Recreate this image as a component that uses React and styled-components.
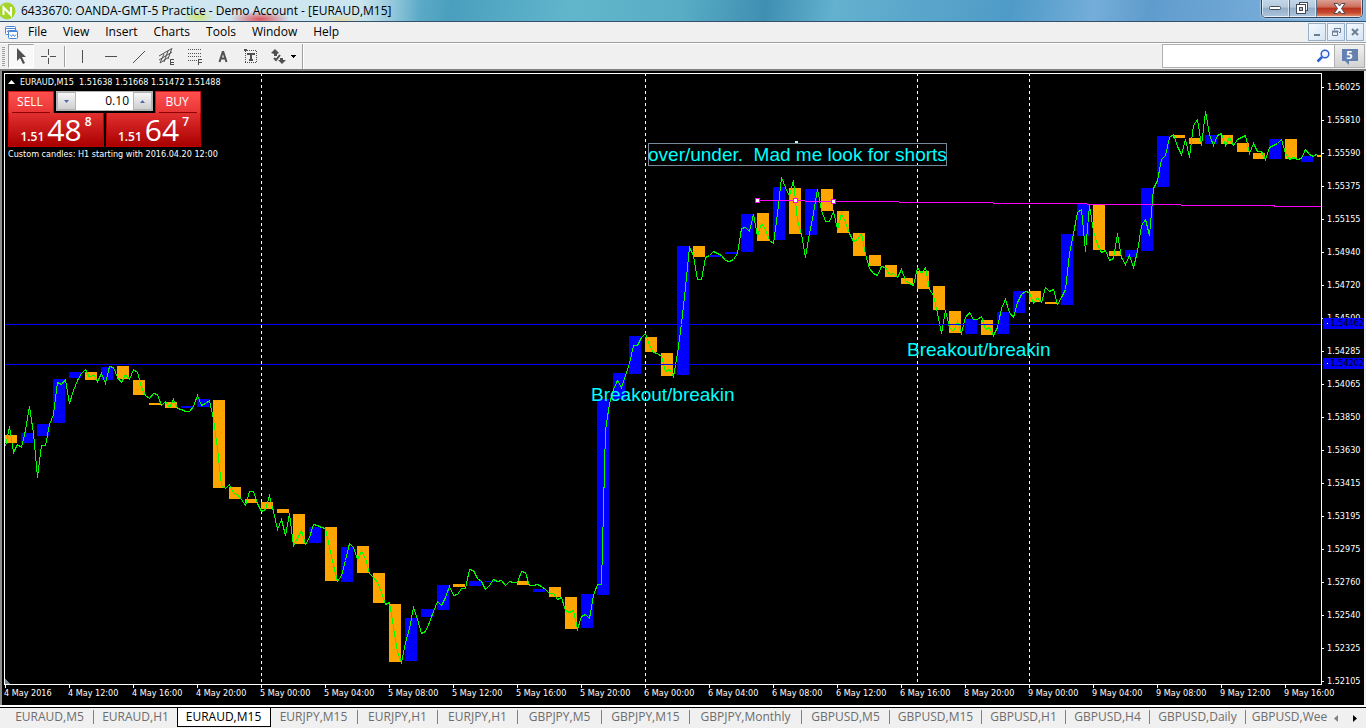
import React, { useState } from 'react'
import styled, { createGlobalStyle } from 'styled-components'

const GlobalStyle = createGlobalStyle`
  * { box-sizing: border-box; }
  body { margin: 0; background: #f0f0f0; }
  button, input { font-family: inherit; padding: 0; margin: 0; border-radius: 0; }
`

const MENU = ['File', 'View', 'Insert', 'Charts', 'Tools', 'Window', 'Help']

const TABS = [
    { name: 'EURAUD,M5', width: 88 },
    { name: 'EURAUD,H1', width: 84 },
    { name: 'EURAUD,M15', width: 92 },
    { name: 'EURJPY,M15', width: 88 },
    { name: 'EURJPY,H1', width: 80 },
    { name: 'EURJPY,H1', width: 80 },
    { name: 'GBPJPY,M5', width: 84 },
    { name: 'GBPJPY,M15', width: 88 },
    { name: 'GBPJPY,Monthly', width: 112 },
    { name: 'GBPUSD,M5', width: 88 },
    { name: 'GBPUSD,M15', width: 92 },
    { name: 'GBPUSD,H1', width: 84 },
    { name: 'GBPUSD,H4', width: 84 },
    { name: 'GBPUSD,Daily', width: 96 },
    { name: 'GBPUSD,Wee', width: 88 },
]

const PRICES = [
    '1.56025', '1.55810', '1.55590', '1.55375', '1.55155', '1.54940', '1.54720',
    '1.54500', '1.54285', '1.54065', '1.53850', '1.53630', '1.53415', '1.53195',
    '1.52975', '1.52760', '1.52540', '1.52325', '1.52105',
]

const TIMES = [
    '4 May 2016', '4 May 12:00', '4 May 16:00', '4 May 20:00', '5 May 00:00', '5 May 04:00',
    '5 May 08:00', '5 May 12:00', '5 May 16:00', '5 May 20:00', '6 May 00:00', '6 May 04:00',
    '6 May 08:00', '6 May 12:00', '6 May 16:00', '8 May 20:00', '9 May 00:00', '9 May 04:00',
    '9 May 08:00', '9 May 12:00', '9 May 16:00',
]

// One close per M15 bar, 4px apart
const CLOSES = [
    446, 426, 452, 444, 447, 430, 406, 433, 477, 445, 445, 424, 414, 382, 384, 379, 403, 390, 380, 373,
    369, 377, 374, 381, 373, 383, 366, 367, 377, 382, 374, 379, 369, 372, 387, 395, 398, 393, 394, 405,
    401, 407, 399, 408, 409, 411, 411, 406, 395, 405, 403, 400, 419, 448, 485, 488, 484, 493, 494, 499,
    505, 491, 491, 503, 511, 509, 495, 511, 529, 519, 535, 513, 545, 538, 530, 544, 537, 524, 525, 527,
    528, 547, 565, 581, 575, 560, 543, 547, 559, 551, 558, 573, 577, 582, 592, 604, 602, 627, 651, 662,
    642, 628, 607, 619, 633, 631, 622, 611, 601, 605, 597, 586, 595, 594, 588, 588, 569, 570, 578, 581,
    589, 585, 579, 581, 580, 585, 581, 582, 582, 571, 572, 585, 585, 584, 586, 589, 593, 593, 599, 597,
    610, 612, 610, 629, 616, 614, 618, 595, 584, 584, 430, 403, 389, 380, 387, 375, 363, 345, 345, 337,
    333, 345, 352, 353, 356, 371, 369, 376, 353, 323, 287, 247, 255, 279, 279, 257, 255, 251, 253, 255,
    260, 261, 259, 253, 228, 227, 231, 214, 236, 223, 229, 240, 243, 213, 177, 187, 196, 180, 220, 234,
    257, 233, 213, 189, 210, 221, 221, 211, 229, 213, 222, 233, 241, 239, 233, 254, 268, 273, 275, 266,
    267, 274, 273, 277, 269, 280, 283, 285, 267, 273, 267, 289, 295, 313, 333, 310, 327, 331, 321, 333,
    317, 312, 319, 319, 316, 329, 327, 335, 327, 308, 299, 312, 317, 302, 294, 291, 292, 303, 297, 302,
    287, 291, 289, 304, 297, 289, 253, 233, 212, 209, 251, 205, 231, 244, 252, 250, 260, 258, 233, 257,
    264, 255, 267, 251, 225, 219, 235, 188, 180, 159, 155, 137, 134, 146, 154, 139, 157, 125, 119, 145,
    111, 134, 145, 135, 133, 145, 137, 145, 139, 137, 135, 153, 143, 151, 151, 159, 147, 145, 143, 139,
    153, 159, 157, 159, 158, 149, 154, 156, 153,
]

// Custom H1 candles: [slot, top, height, up]
const CANDLES = [
    [0, 435, 8, 0], [1, 433, 10, 1], [2, 424, 12, 1], [3, 379, 44, 1], [4, 372, 6, 1], [5, 372, 8, 0],
    [6, 367, 13, 1], [7, 366, 13, 0], [8, 380, 15, 0], [9, 403, 2, 0], [10, 402, 6, 0], [11, 406, 2, 1],
    [12, 399, 8, 1], [13, 400, 88, 0], [14, 487, 12, 0], [15, 499, 4, 0], [16, 502, 7, 0], [17, 509, 4, 0],
    [18, 514, 30, 0], [19, 527, 16, 1], [20, 527, 54, 0], [21, 547, 35, 1], [22, 546, 27, 0], [23, 573, 30, 0],
    [24, 604, 58, 0], [25, 618, 43, 1], [26, 609, 8, 1], [27, 585, 25, 1], [28, 584, 3, 0], [29, 581, 5, 1],
    [30, 581, 1, 1], [32, 581, 4, 0], [33, 589, 3, 1], [34, 587, 10, 0], [35, 597, 32, 0], [36, 594, 34, 1],
    [37, 399, 196, 1], [38, 373, 26, 1], [39, 336, 38, 1], [40, 337, 15, 0], [41, 353, 23, 0], [42, 246, 129, 1],
    [43, 246, 11, 0], [44, 255, 2, 1], [45, 252, 2, 1], [46, 214, 38, 1], [47, 213, 28, 0], [48, 187, 53, 1],
    [49, 188, 46, 0], [50, 189, 46, 1], [51, 189, 22, 0], [52, 211, 22, 0], [53, 233, 23, 0], [54, 255, 11, 0],
    [55, 265, 12, 0], [56, 278, 6, 0], [57, 271, 18, 0], [58, 286, 24, 0], [59, 311, 22, 0], [60, 319, 15, 1],
    [61, 320, 15, 0], [62, 312, 22, 1], [63, 291, 22, 1], [64, 291, 11, 0], [65, 302, 2, 0], [66, 234, 71, 1],
    [67, 204, 32, 1], [68, 205, 45, 0], [69, 251, 5, 0], [70, 250, 7, 1], [71, 188, 63, 1], [72, 136, 51, 1],
    [73, 135, 3, 0], [74, 138, 6, 0], [75, 135, 9, 1], [76, 135, 9, 0], [77, 143, 9, 0], [78, 153, 6, 0],
    [79, 139, 20, 1], [80, 139, 20, 0], [81, 156, 6, 1], [82, 155, 2, 0],
]

const SEPARATORS = [261, 645, 917, 1029]
const LEVELS = [324, 364]
const HANDLES = [[757, 200], [795, 200], [833, 201]]

const Window = styled.div`
  display: flex;
  flex-direction: column;
  height: 100vh;
  min-height: 720px;
  overflow: hidden;
  background: #f0f0f0;
  font-family: 'Open Sans', 'Noto Sans', sans-serif;
  color: #000;
`

const TitleBar = styled.header`
  display: flex;
  align-items: flex-start;
  height: 22px;
  flex: none;
  padding-right: 3px;
  border-bottom: 1px solid #35506a;
  background:
    radial-gradient(ellipse 30px 8px at 260px 19px, rgba(226, 58, 66, 0.85), transparent),
    radial-gradient(ellipse 16px 8px at 198px 17px, rgba(205, 228, 90, 0.8), transparent),
    radial-gradient(ellipse 22px 6px at 342px 20px, rgba(232, 214, 150, 0.8), transparent),
    linear-gradient(90deg, rgba(255, 255, 255, 0.62) 0, rgba(255, 255, 255, 0.6) 360px, transparent 420px),
    linear-gradient(100deg, #8fc4e2 0, #7fc0d8 26%, #4a9fbe 33%, #62b6cc 42%, #58acc4 50%, #3f8fb2 56%, #63b1cf 61%, #5aa6cb 67%, #4f9bc8 74%, #74add9 80%, #5f9ccd 84%, #86b7e2 100%);
`

const Title = styled.h1`
  flex: 1;
  margin: 0;
  padding-left: 4px;
  font-size: 12px;
  font-weight: 400;
  line-height: 21px;
  white-space: nowrap;
`

const Caption = styled.div`
  display: flex;
  height: 18px;
  border: 1px solid #33475c;
  border-top: 0;
  border-radius: 0 0 5px 5px;
  overflow: hidden;
  box-shadow: 0 0 2px #fff;
`

const CaptionButton = styled.button`
  display: grid;
  place-items: center;
  width: ${props => (props.$close ? 46 : 27)}px;
  border: 1px solid rgba(255, 255, 255, 0.6);
  border-top: 0;
  background: ${props => (props.$close
      ? 'linear-gradient(#dba094 0, #cd6a58 45%, #b8301c 50%, #c8492e 80%, #dd8a68 100%)'
      : 'linear-gradient(#c4d6e8 0, #b4c9de 45%, #93aec8 50%, #a9c3dc 100%)')};
  & + & { border-left-color: #5a6f86; }
`

const MenuBar = styled.nav`
  display: flex;
  align-items: center;
  height: 21px;
  flex: none;
  padding: 0 2px 0 4px;
  border-bottom: 1px solid #a0a0a0;
`

const MenuItem = styled.button`
  height: 20px;
  margin-left: 16px;
  border: 0;
  background: none;
  font-size: 12px;
  line-height: 20px;
  &:first-of-type { margin-left: 9px; }
`

const MdiButtons = styled.div`
  display: flex;
  gap: 1px;
  margin-left: auto;
`

const MdiButton = styled.button`
  display: grid;
  place-items: center;
  width: 18px;
  height: 18px;
  border: 1px solid #98b0c8;
  background: linear-gradient(135deg, #f4f9fe, #d6e6f6);
`

const Toolbar = styled.div`
  display: flex;
  align-items: stretch;
  height: 28px;
  flex: none;
  padding-left: 2px;
  border-top: 1px solid #fff;
  border-bottom: 2px solid #808080;
`

const Grip = styled.span`
  width: 3px;
  margin: 3px 3px 3px 0;
  background: repeating-linear-gradient(#a0a0a0 0 1px, transparent 1px 2px);
`

const Tool = styled.button`
  display: flex;
  align-items: center;
  justify-content: center;
  width: ${props => props.$width || 28}px;
  height: 24px;
  border: 1px solid;
  border-color: ${props => (props.$active ? '#a0a0a0 #fff #fff #a0a0a0' : 'transparent')};
  background: ${props => (props.$active ? '#f8f8f8' : 'none')};
`

const Divider = styled.span`
  width: 2px;
  margin: ${props => (props.$full ? '0' : '2px')} 2px;
  border-left: 1px solid #a0a0a0;
  border-right: 1px solid #fff;
`

const Search = styled.label`
  display: flex;
  align-items: center;
  width: 173px;
  height: 24px;
  margin-left: auto;
  padding-right: 4px;
  border: 1px solid #b0b0b0;
  background: #fff;
  input {
    flex: 1;
    min-width: 0;
    border: 0;
    outline: 0;
    background: none;
    font-size: 12px;
  }
`

const Mail = styled.button`
  display: grid;
  place-items: center;
  width: 30px;
  height: 24px;
  margin-right: 1px;
  border: 1px solid #b0b0b0;
  border-left: 0;
  background: linear-gradient(#f0f0f0, #d2d2d2);
`

const Bubble = styled.span`
  position: relative;
  width: 16px;
  height: 12px;
  margin-bottom: 2px;
  background: #6380b0;
  color: #fff;
  font-size: 11px;
  font-weight: 700;
  line-height: 12px;
  &::after {
    content: '';
    position: absolute;
    left: 3px;
    top: 12px;
    border: 2px solid transparent;
    border-top-color: #6380b0;
    border-right-color: #6380b0;
  }
`

const Chart = styled.main`
  display: grid;
  grid-template-columns: minmax(0, 1fr) 42px;
  grid-template-rows: minmax(0, 1fr) 20px;
  flex: 1;
  min-height: 0;
  padding: 2px 0 0 2px;
  border-left: 2px solid #8c8c8c;
  border-right: 2px solid #f0f0f0;
  background: #000;
  color: #fff;
  font-family: 'DejaVu Sans Condensed', 'DejaVu Sans', sans-serif;
  font-size: 9px;
  line-height: 11px;
`

const Plot = styled.section`
  position: relative;
  border: 1px solid #fff;
  overflow: hidden;
  > svg {
    display: block;
    width: 100%;
    height: 100%;
  }
`

const Overlay = styled.div`
  position: absolute;
  left: 3px;
  top: 2px;
  white-space: pre;
`

const Quote = styled.div`
  display: flex;
  align-items: center;
  gap: 5px;
  height: 12px;
  margin-bottom: 3px;
`

const Deal = styled.div`
  position: relative;
  display: flex;
  gap: 2px;
  margin-bottom: 2px;
  font-family: 'Open Sans', 'Noto Sans', sans-serif;
`

const DealButton = styled.button`
  display: flex;
  flex-direction: column;
  align-items: ${props => (props.$side === 'buy' ? 'flex-end' : 'flex-start')};
  width: ${props => (props.$side === 'buy' ? 95 : 96)}px;
  border: 0;
  background: none;
  color: #fff;
`

const DealName = styled.span`
  width: 46px;
  height: 22px;
  border: 1px solid #c81818;
  border-bottom: 0;
  padding-right: 2px;
  background: linear-gradient(#ff5050, #e83434);
  font-size: 12px;
  line-height: 20px;
  &::after {
    content: '';
    display: block;
    height: 1px;
    margin: 0 1px 0 3px;
    background: #8c0000;
  }
`

const DealPrice = styled.span`
  display: flex;
  align-items: flex-end;
  justify-content: center;
  gap: 3px;
  width: 100%;
  height: 34px;
  border: 1px solid #c00000;
  border-top: 0;
  background: linear-gradient(#e23030, #aa0000);
  padding-bottom: 2px;
`

const Small = styled.span`
  font-size: 12px;
  font-weight: 600;
  line-height: 14px;
`

const Big = styled.span`
  font-size: 30px;
  line-height: 28px;
`

const Pip = styled.span`
  align-self: flex-start;
  font-size: 12px;
  font-weight: 600;
  line-height: 18px;
`

const Volume = styled.div`
  position: absolute;
  left: 48px;
  top: 0;
  display: flex;
  width: 97px;
  height: 20px;
  border: 1px solid #b4b4b4;
  input {
    flex: 1;
    min-width: 0;
    padding-right: 4px;
    border: 0;
    background: #fff;
    font-size: 12px;
    line-height: 18px;
    text-align: right;
  }
  button {
    display: grid;
    place-items: center;
    width: 19px;
    border: 1px solid #b4b4b4;
    background: linear-gradient(#f6f6f6, #cfcfcf);
  }
`

const PriceAxis = styled.ul`
  position: relative;
  margin: 0;
  padding: 9px 0 0;
  list-style: none;
  li {
    display: flex;
    align-items: center;
    gap: 3px;
    height: 11px;
    margin-bottom: 22px;
  }
  li::before {
    content: '';
    width: 2px;
    height: 1px;
    background: #fff;
  }
`

const Flag = styled.output`
  position: absolute;
  left: 1px;
  right: 0;
  top: ${props => props.$top}px;
  height: 12px;
  padding-left: 4px;
  background: #0000ff;
  color: #000;
`

const TimeAxis = styled.ol`
  grid-column: 1 / -1;
  display: flex;
  margin: 0;
  padding: 0;
  list-style: none;
  overflow: hidden;
  li {
    flex: 0 0 64px;
    white-space: nowrap;
  }
  li::before {
    content: '';
    display: block;
    width: 1px;
    height: 3px;
    margin-left: 1px;
    background: #fff;
  }
`

const TabBar = styled.div`
  display: flex;
  height: 23px;
  flex: none;
  border-top: 2px solid #fff;
`

const Tabs = styled.div`
  display: flex;
  flex: 1;
  min-width: 0;
  overflow: hidden;
  padding-left: 6px;
  border-top: 1px solid #000;
`

const Tab = styled.button`
  flex: 0 0 ${props => props.$width}px;
  height: 18px;
  border: 0;
  background: ${props => (props.$active ? '#fff' : 'none')};
  box-shadow: ${props => (props.$active ? '0 0 0 1px #000' : 'none')};
  color: ${props => (props.$active ? '#000' : '#6d6d6d')};
  font-size: 12px;
  line-height: 18px;
  white-space: nowrap;
  span {
    display: block;
    height: 14px;
    line-height: 14px;
    border-right: 1px solid ${props => (props.$line ? '#808080' : 'transparent')};
  }
`

const Scroll = styled.div`
  display: flex;
  justify-content: space-between;
  width: 38px;
  padding-right: 3px;
  border-top: 1px solid #000;
  button {
    width: 16px;
    height: 18px;
    border: 0;
    background: none;
  }
`

const linePoints = CLOSES.map((y, i) => `${5 + i * 4},${y}`).join(' ')

const ToolIcon = ({ children, width = 20 }) => (
    <svg width={width} height="20" viewBox={`0 0 ${width} 20`} fill="none" stroke="#505050" shapeRendering="crispEdges">
        {children}
    </svg>
)

const Logo = () => (
    <svg width="17" height="21" viewBox="0 0 17 21">
        <circle cx="7" cy="11" r="8.5" fill="#a5d52a" />
        <path d="M3.5 15V7.5L11 15V7" fill="none" stroke="#fff" strokeWidth="2" />
    </svg>
)

const ChartsIcon = () => (
    <svg width="15" height="15" viewBox="0 0 15 15" fill="#fff" stroke="#4a86d8">
        <rect x="1.5" y="1.5" width="10" height="8" rx="1" />
        <path d="M2 3.5h9M3 7l1.5-2L6 7l2-2" />
        <rect x="4.5" y="5.5" width="9" height="8" rx="1" />
        <path d="M5 6.5h8M6 9.5l1.5 2 1.5-2 1.5 2 1.5-2" fill="none" />
    </svg>
)

const Tools = () => (
    <>
        <Tool $active $width={26} aria-label="Cursor">
            <ToolIcon>
                <path d="M6 2v13l3-3 3 6 2-1-3-6h4z" fill="#505050" stroke="none" shapeRendering="auto" />
            </ToolIcon>
        </Tool>
        <Tool aria-label="Crosshair">
            <ToolIcon><path d="M10.5 3v6M10.5 12v6M3 10.5h6M12 10.5h6" /></ToolIcon>
        </Tool>
        <Divider />
        <Tool aria-label="Vertical line">
            <ToolIcon><path d="M10.5 4v13" /></ToolIcon>
        </Tool>
        <Tool aria-label="Horizontal line">
            <ToolIcon><path d="M5 10.5h12" /></ToolIcon>
        </Tool>
        <Tool aria-label="Trendline">
            <ToolIcon><path d="M5 17L17 5" shapeRendering="auto" /></ToolIcon>
        </Tool>
        <Tool aria-label="Equidistant channel">
            <ToolIcon>
                <path d="M3 10L15 3M3 14L16 6M4 17L13 11M4 17l4-9M8 16l4-11M12 13l4-11" shapeRendering="auto" />
                <path d="M18 13.5h-3.5v5h3.5M15 16h3" />
            </ToolIcon>
        </Tool>
        <Tool aria-label="Fibonacci retracement">
            <ToolIcon>
                <path d="M4 3.5h14M4 7.5h14M4 10.5h14M4 14.5h9" strokeDasharray="1 1" />
                <path d="M18 13.5h-3.5v5M15 16h3" />
            </ToolIcon>
        </Tool>
        <Tool aria-label="Text">
            <ToolIcon>
                <path d="M7.5 16L10.7 6h0.6L14.5 16M8.5 12.500h5" strokeWidth="2" shapeRendering="auto" />
            </ToolIcon>
        </Tool>
        <Tool aria-label="Text label">
            <ToolIcon>
                <path d="M5.5 5v12M16.5 5v12M5 4.500h12M5 16.500h12" strokeDasharray="1 1" />
                <path d="M7 8h8M11 8v6M9 14h4" strokeWidth="2" />
                <path d="M4 3h3v2H4z" fill="#505050" stroke="none" />
            </ToolIcon>
        </Tool>
        <Tool $width={36} aria-label="Arrows">
            <ToolIcon width={28}>
                <path d="M7 3l4 4-2 1v2H6V8L3 7zM14 18l-4-4h2v-2h3v2h3z" fill="#505050" stroke="none" shapeRendering="auto" />
                <path d="M6 12l2 2 4-5" strokeWidth="2" shapeRendering="auto" />
                <path d="M22 9h6l-3 3z" fill="#000" stroke="none" />
            </ToolIcon>
        </Tool>
        <Divider $full />
    </>
)

const PriceChart = () => (
    <svg>
        <g transform="translate(-5 -74)" shapeRendering="crispEdges">
            {SEPARATORS.map(x => (
                <line key={x} x1={x + 0.5} x2={x + 0.5} y1="73" y2="684" stroke="#fff" strokeDasharray="3 3" />
            ))}
            {CANDLES.map(([slot, y, h, up]) => (
                <rect key={slot} x={5 + slot * 16} y={y} width="12" height={h} fill={up ? '#0000ff' : '#ffa500'} />
            ))}
            <polyline points={linePoints} transform="translate(0.5 0.5)" fill="none" stroke="#00ff00" />
            {LEVELS.map(y => (
                <line key={y} x1="5" x2="4000" y1={y + 0.5} y2={y + 0.5} stroke="#0000ff" />
            ))}
            <line x1="757" y1="200.5" x2="1321" y2="206.5" stroke="#ff00ff" />
            {HANDLES.map(([x, y]) => (
                <rect key={x} x={x - 1.5} y={y - 1.5} width="4" height="4" fill="#fff" stroke="#ff00ff" />
            ))}
            <path d="M5 679v5h5z" fill="#778899" />
            <rect x="648.5" y="143.5" width="298" height="22" fill="none" stroke="#778899" />
            <rect x="795" y="141" width="3" height="2" fill="#b0ffff" />
        </g>
        <g transform="translate(-5 -74)" fill="#00ffff" fontFamily="'Liberation Sans', Arial, sans-serif" fontSize="19">
            <text x="648" y="161" style={{ whiteSpace: 'pre' }}>{'over/under.  Mad me look for shorts'}</text>
            <text x="591" y="401">Breakout/breakin</text>
            <text x="907" y="356">Breakout/breakin</text>
        </g>
    </svg>
)

const App = () => {
    const [active, setActive] = useState(2)
    const [volume, setVolume] = useState('0.10')

    const step = (diff) => {
        setVolume(Math.max(0.01, Number(volume) + diff).toFixed(2))
    }

    return (
        <Window>
            <GlobalStyle />
            <TitleBar>
                <Logo />
                <Title>6433670: OANDA-GMT-5 Practice - Demo Account - [EURAUD,M15]</Title>
                <Caption>
                    <CaptionButton aria-label="Minimize">
                        <svg width="13" height="6" viewBox="0 0 13 6"><rect x="0.5" y="1.5" width="11" height="3" rx="1" fill="#fff" stroke="#444a58" /></svg>
                    </CaptionButton>
                    <CaptionButton aria-label="Restore">
                        <svg width="13" height="13" viewBox="0 0 13 13" fill="#fff" stroke="#444a58">
                            <rect x="3.5" y="0.5" width="8" height="8" />
                            <rect x="0.5" y="2.5" width="9" height="9" />
                            <rect x="3.5" y="5.5" width="3" height="3" fill="#a9c3dc" />
                        </svg>
                    </CaptionButton>
                    <CaptionButton $close aria-label="Close">
                        <svg width="13" height="11" viewBox="0 0 13 11" fill="#fff" stroke="#444a58">
                            <path d="M1 0.5h3.5l2 2.5 2-2.5H12L8.5 5.5l3.5 5H8.500l-2-2.5-2 2.5H1l3.5-5z" />
                        </svg>
                    </CaptionButton>
                </Caption>
            </TitleBar>
            <MenuBar>
                <ChartsIcon />
                {MENU.map(name => <MenuItem key={name}>{name}</MenuItem>)}
                <MdiButtons>
                    <MdiButton aria-label="Minimize chart">
                        <svg width="10" height="10"><path d="M2 7h6v2H2z" fill="#6c7f92" /></svg>
                    </MdiButton>
                    <MdiButton aria-label="Restore chart">
                        <svg width="10" height="10" fill="none" stroke="#6c7f92"><path d="M3.5 3V1.5h6v4H8M3 1.5h7M1.5 4.5h5v4h-5zM1 4h6v1H1" /></svg>
                    </MdiButton>
                    <MdiButton aria-label="Close chart">
                        <svg width="10" height="10"><path d="M2 2l6 6M8 2L2 8" stroke="#6c7f92" strokeWidth="2" /></svg>
                    </MdiButton>
                </MdiButtons>
            </MenuBar>
            <Toolbar>
                <Grip />
                <Tools />
                <Search>
                    <input type="text" aria-label="Search" />
                    <svg width="14" height="14" viewBox="0 0 14 14" fill="none" stroke="#2a5fd0">
                        <circle cx="9" cy="5" r="3.8" strokeWidth="1.5" fill="#eef4ff" />
                        <path d="M6 8L1.5 12.5" strokeWidth="2.5" />
                    </svg>
                </Search>
                <Mail><Bubble>5</Bubble></Mail>
            </Toolbar>
            <Chart>
                <Plot>
                    <PriceChart />
                    <Overlay>
                        <Quote>
                            <svg width="7" height="4"><path d="M0 4L3.5 0 7 4z" fill="#fff" /></svg>
                            {'EURAUD,M15  1.51638 1.51668 1.51472 1.51488'}
                        </Quote>
                        <Deal>
                            <DealButton $side="sell">
                                <DealName>SELL</DealName>
                                <DealPrice><Small>1.51</Small><Big>48</Big><Pip>8</Pip></DealPrice>
                            </DealButton>
                            <DealButton $side="buy">
                                <DealName>BUY</DealName>
                                <DealPrice><Small>1.51</Small><Big>64</Big><Pip>7</Pip></DealPrice>
                            </DealButton>
                            <Volume>
                                <button aria-label="Decrease volume" onClick={() => step(-0.01)}>
                                    <svg width="5" height="3"><path d="M0 0h5L2.5 3z" fill="#5068a8" /></svg>
                                </button>
                                <input type="text" aria-label="Volume" value={volume} onChange={e => setVolume(e.target.value)} />
                                <button aria-label="Increase volume" onClick={() => step(0.01)}>
                                    <svg width="5" height="3"><path d="M0 3h5L2.5 0z" fill="#5068a8" /></svg>
                                </button>
                            </Volume>
                        </Deal>
                        Custom candles: H1 starting with 2016.04.20 12:00
                    </Overlay>
                </Plot>
                <PriceAxis>
                    {PRICES.map(price => <li key={price}>{price}</li>)}
                    <Flag as="li" $top={245}>1.54462</Flag>
                    <Flag as="li" $top={285}>1.54202</Flag>
                </PriceAxis>
                <TimeAxis>
                    {TIMES.map(time => <li key={time}>{time}</li>)}
                </TimeAxis>
            </Chart>
            <TabBar>
                <Tabs>
                    {TABS.map((tab, i) => (
                        <Tab
                            key={i}
                            $width={tab.width}
                            $active={i === active}
                            $line={i !== active && i !== active - 1 && i !== TABS.length - 1}
                            onClick={() => setActive(i)}
                        >
                            <span>{tab.name}</span>
                        </Tab>
                    ))}
                </Tabs>
                <Scroll>
                    <button aria-label="Scroll left"><svg width="4" height="7"><path d="M4 0v7L0 3.5z" fill="#808080" /></svg></button>
                    <button aria-label="Scroll right"><svg width="4" height="7"><path d="M0 0v7l4-3.500z" fill="#000" /></svg></button>
                </Scroll>
            </TabBar>
        </Window>
    )
}

export default App
